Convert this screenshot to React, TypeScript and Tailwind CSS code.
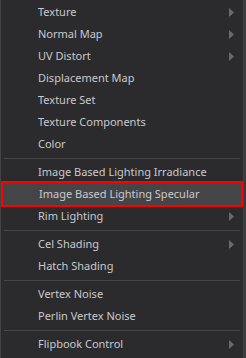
import { Fragment } from 'react';

type Item = { label: string; sub?: boolean; active?: boolean };

const groups: Item[][] = [
  [
    { label: 'Texture', sub: true },
    { label: 'Normal Map', sub: true },
    { label: 'UV Distort', sub: true },
    { label: 'Displacement Map' },
    { label: 'Texture Set' },
    { label: 'Texture Components' },
    { label: 'Color' },
  ],
  [
    { label: 'Image Based Lighting Irradiance' },
    { label: 'Image Based Lighting Specular', active: true },
    { label: 'Rim Lighting', sub: true },
  ],
  [{ label: 'Cel Shading', sub: true }, { label: 'Hatch Shading' }],
  [{ label: 'Vertex Noise' }, { label: 'Perlin Vertex Noise' }],
  [{ label: 'Flipbook Control', sub: true }],
];

function Arrow() {
  return (
    <svg width="5" height="9" viewBox="0 0 5 9" className="shrink-0">
      <path d="M0 0 L5 4.5 L0 9 Z" fill="#6a6a6d" />
    </svg>
  );
}

export default function App() {
  return (
    <div className="flex h-[358px] w-[246px] bg-[#3a3a3c]">
      <div
        className="h-full w-[244px] border-l border-r border-[#434346] bg-[#2b2b2e] pt-px"
        style={{ fontFamily: '"Noto Sans", "Open Sans", sans-serif' }}
      >
        {groups.map((group, gi) => (
          <Fragment key={gi}>
            {gi > 0 && <div className="mx-[3px] my-[2.5px] h-px bg-[#45454a]" />}
            {group.map((item) =>
              item.active ? (
                <div
                  key={item.label}
                  className="-my-[2px] flex h-[26px] items-center border-2 border-[#ff0000] bg-[#454548] pl-[36px] pr-[9px] text-[11px] text-[#c9c9cc]"
                >
                  <span className="flex-1 whitespace-nowrap">{item.label}</span>
                </div>
              ) : (
                <div
                  key={item.label}
                  className="flex h-[22px] items-center pl-[37px] pr-[9px] text-[11px] text-[#c9c9cc]"
                >
                  <span className="flex-1 whitespace-nowrap">{item.label}</span>
                  {item.sub && <Arrow />}
                </div>
              )
            )}
          </Fragment>
        ))}
      </div>
    </div>
  );
}
